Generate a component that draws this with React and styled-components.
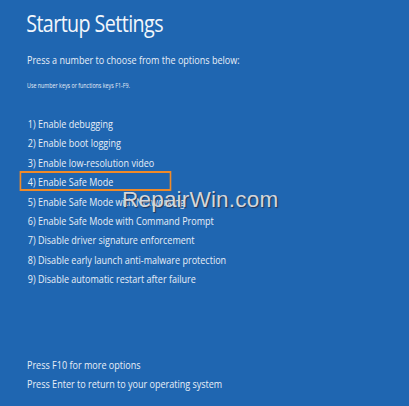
import React from 'react'
import styled, { createGlobalStyle } from 'styled-components'

const options = [
  'Enable debugging',
  'Enable boot logging',
  'Enable low-resolution video',
  'Enable Safe Mode',
  'Enable Safe Mode with Networking',
  'Enable Safe Mode with Command Prompt',
  'Disable driver signature enforcement',
  'Disable early launch anti-malware protection',
  'Disable automatic restart after failure',
]

const GlobalStyle = createGlobalStyle`
  html, body {
    margin: 0;
    padding: 0;
    background: #1f66b1;
  }
`

const App = () => {
  return (
    <>
      <GlobalStyle />
      <Screen>
        <Content>
          <Title>Startup Settings</Title>
          <Lead>Press a number to choose from the options below:</Lead>
          <Hint>Use number keys or functions keys F1-F9.</Hint>
          <OptionList>
            {options.map((text, index) => (
              <Option key={text} $selected={index === 3}>
                {index + 1}) {text}
              </Option>
            ))}
          </OptionList>
          <Footer>
            <FooterLine>Press F10 for more options</FooterLine>
            <FooterLine>Press Enter to return to your operating system</FooterLine>
          </Footer>
        </Content>
        <Watermark>RepairWin.com</Watermark>
      </Screen>
    </>
  )
}

const Screen = styled.div`
  position: relative;
  width: 409px;
  height: 406px;
  box-sizing: border-box;
  padding: 8px 0 0 27px;
  background: #1f66b1;
  color: #e8eef7;
  font-family: "Open Sans", "Noto Sans", sans-serif;
  overflow: hidden;
`

// the screenshot is squeezed sideways, so the text block is too
const Content = styled.div`
  display: flex;
  flex-direction: column;
  transform: scaleX(0.82);
  transform-origin: left top;
`

const Title = styled.h1`
  margin: 0 0 0 -1px;
  font-size: 24px;
  font-weight: 400;
  line-height: 30px;
  color: #f2f6fb;
  letter-spacing: -0.7px;
`

const Lead = styled.p`
  margin: 14px 0 0;
  font-size: 11px;
  line-height: 16px;
`

const Hint = styled.p`
  margin: 12px 0 0;
  font-size: 6.5px;
  line-height: 12px;
`

const OptionList = styled.div`
  margin-top: 21px;
  display: flex;
  flex-direction: column;
`

const Option = styled.div`
  width: 185px;
  margin-left: -9px;
  padding-left: 8px;
  height: 19.4px;
  line-height: 17px;
  font-size: 11px;
  white-space: nowrap;
  box-sizing: border-box;
  border: 2px solid ${({ $selected }) => ($selected ? '#f08a28' : 'transparent')};
  border-left-width: 2.4px;
  border-right-width: 2.4px;
`

const Footer = styled.div`
  margin-top: 67px;
  display: flex;
  flex-direction: column;
`

const FooterLine = styled.div`
  font-size: 11px;
  line-height: 19px;
`

const Watermark = styled.div`
  position: absolute;
  left: 122px;
  top: 187px;
  font-family: "Liberation Sans", Arial, sans-serif;
  font-size: 22.5px;
  color: #d4d6da;
  text-shadow: 1px 1px 1px rgba(40, 40, 60, 0.8);
  letter-spacing: 0.2px;
`

export default App
